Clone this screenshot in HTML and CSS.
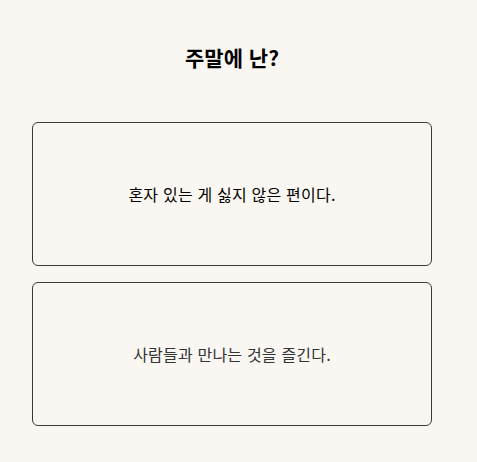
FILE: index.html
```html
<!DOCTYPE html>
<html lang="ko">
<head>
<meta charset="utf-8">
<link rel="stylesheet" href="styles.css">
</head>
<body>
<main class="quiz">
  <h1 class="question">주말에 난?</h1>
  <div class="options">
    <button class="option option-active">혼자 있는 게 싫지 않은 편이다.</button>
    <button class="option">사람들과 만나는 것을 즐긴다.</button>
  </div>
</main>
</body>
</html>
```
FILE: styles.css
```css
html, body {
  margin: 0;
  padding: 0;
  background: #faf7f2;
}
body {
  font-family: "Noto Sans CJK KR", "Noto Sans", sans-serif;
}
.quiz {
  width: 400px;
  padding: 43px 0 0 32px;
  display: flex;
  flex-direction: column;
}
.question {
  margin: 0 0 51px 0;
  font-size: 21px;
  line-height: 28px;
  font-weight: 700;
  text-align: center;
  color: #000;
}
.options {
  display: flex;
  flex-direction: column;
  gap: 16px;
}
.option {
  height: 144px;
  border: 1px solid #3a3a3e;
  border-radius: 6px;
  background: #faf7f2;
  font-family: inherit;
  font-size: 16px;
  letter-spacing: 0.2px;
  color: #333;
  padding: 0;
}
.option-active {
  color: #000;
}
```
